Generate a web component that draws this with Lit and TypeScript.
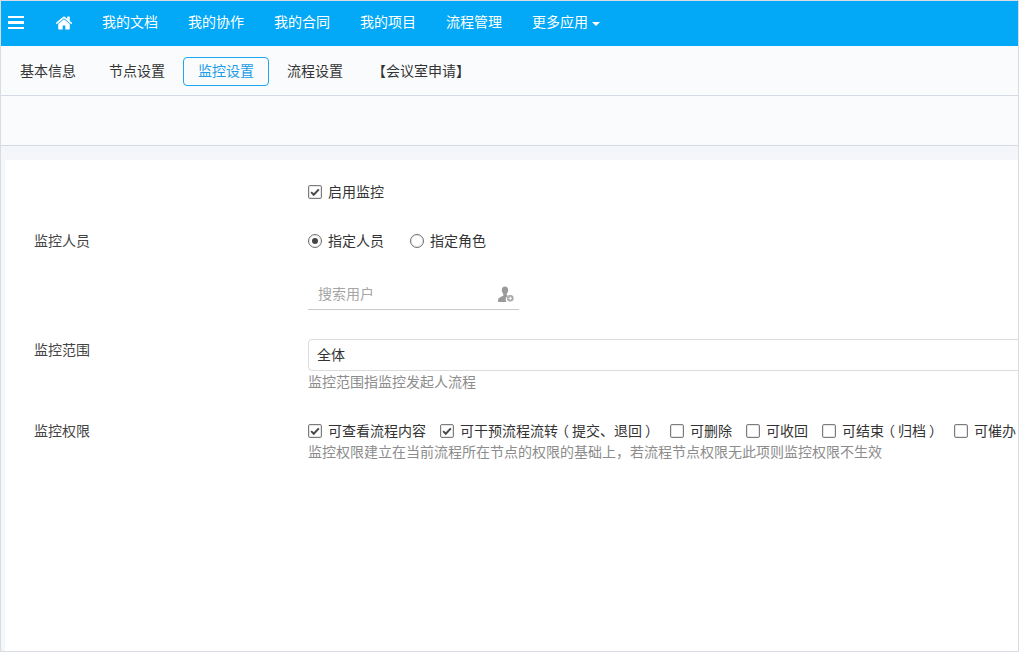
import { LitElement, html, css, svg } from 'lit';
import { customElement } from 'lit/decorators.js';
import { classMap } from 'lit/directives/class-map.js';

const NAV = ['我的文档', '我的协作', '我的合同', '我的项目', '流程管理'];
const TABS = ['基本信息', '节点设置', '监控设置', '流程设置', '【会议室申请】'];
const PERMS = [
  { label: '可查看流程内容', checked: true },
  { label: '可干预流程流转（提交、退回）', checked: true },
  { label: '可删除', checked: false },
  { label: '可收回', checked: false },
  { label: '可结束（归档）', checked: false },
  { label: '可催办', checked: false },
];

const homeIcon = svg`<svg class="home" viewBox="0 0 1792 1792" width="18" height="18"><path fill="#fff" d="M1472 992v480q0 26-19 45t-45 19h-384v-384h-256v384h-384q-26 0-45-19t-19-45v-480q0-1 .5-3t.5-3l575-474 575 474q1 2 1 6zm223-69l-62 74q-8 9-21 11h-3q-13 0-21-7l-692-577-692 577q-12 8-24 7-13-2-21-11l-62-74q-8-10-7-23.500t11-21.500l719-599q32-26 76-26t76 26l244 204v-195q0-14 9-23t23-9h192q14 0 23 9t9 23v408l219 182q10 8 11 21.500t-7 23.500z"/></svg>`;

const userIcon = svg`<svg viewBox="0 0 16 16" width="16" height="16">
  <path fill="#9a9a9a" d="M7 0.500c2 0 3.200 1.500 3.200 3.600 0 1.500-.6 2.900-1.500 3.600v1.300c.6.300 1 .5 1.300.7a4.300 4.300 0 0 0-1.500 6.300H1c-.8 0-1-.5-1-1.100 0-.9.300-2.200 1-2.900.9-.9 2.700-1.500 4.300-2.300V7.700C4.400 7 3.800 5.600 3.800 4.100 3.800 2 5 .5 7 .5z"/>
  <circle cx="12.300" cy="12.300" r="3.300" fill="#a8a8a8"/>
  <path stroke="#fff" stroke-width="1" d="M10.600 12.300h3.400M12.300 10.600v3.400"/>
</svg>`;

const checkMark = svg`<svg viewBox="0 0 14 14" width="12" height="12"><path fill="none" stroke="#4a4a4a" stroke-width="2.300" d="M2.500 7.200l3 3 6-6.200"/></svg>`;

@customElement('app-root')
export class AppRoot extends LitElement {
  static styles = css`
    :host {
      display: block;
      width: 1019px;
      height: 652px;
      box-sizing: border-box;
      border: 1px solid #d9dce3;
      overflow: hidden;
      background: #f4f6fa;
      font-family: "Noto Sans CJK SC", "Liberation Sans", sans-serif;
      font-size: 14px;
      color: #333;
    }
    .nav {
      display: flex;
      align-items: center;
      box-sizing: border-box;
      height: 45px;
      padding-bottom: 2px;
      background: #03a9f7;
      color: #fff;
    }
    .burger {
      display: flex;
      flex-direction: column;
      gap: 3px;
      width: 16px;
      margin-left: 7px;
    }
    .burger i {
      display: block;
      height: 2.500px;
      background: #fff;
    }
    .home {
      display: block;
      margin-left: 31px;
      margin-right: 29px;
    }
    .nav-item {
      display: flex;
      align-items: center;
      margin-right: 30px;
      margin-bottom: 4px;
      line-height: 20px;
    }
    .caret {
      width: 0;
      height: 0;
      margin-left: 4px;
      margin-top: 7px;
      border-left: 4px solid transparent;
      border-right: 4px solid transparent;
      border-top: 4px solid #fff;
    }
    .tabs {
      display: flex;
      align-items: center;
      gap: 3px;
      box-sizing: border-box;
      height: 50px;
      padding: 0 4px;
      background: #fafbfd;
      border-bottom: 1px solid #d3dae3;
    }
    .tab {
      box-sizing: border-box;
      height: 29px;
      margin-top: 2px;
      padding: 0 14px;
      border: 1px solid transparent;
      border-radius: 4px;
      line-height: 25px;
      white-space: nowrap;
    }
    .tab:last-child {
      margin-left: -4px;
    }
    .tab.active {
      border-color: #1da7ee;
      color: #1a9de6;
    }
    .toolbar {
      box-sizing: border-box;
      height: 50px;
      background: #fafbfd;
      border-bottom: 1px solid #d3dae3;
    }
    .body {
      height: 505px;
      padding: 14px 0 0 4px;
      box-sizing: border-box;
    }
    .panel {
      height: 100%;
      box-sizing: border-box;
      padding: 22px 0 0 29px;
      background: #fff;
      overflow: hidden;
    }
    .row {
      display: grid;
      grid-template-columns: 274px 1fr;
      line-height: 18px;
      margin-bottom: 31px;
    }
    .row.search-row {
      margin-top: -2px;
      margin-bottom: 29px;
    }
    .label {
      color: #444;
    }
    .field {
      min-width: 0;
    }
    .opts {
      display: flex;
      white-space: nowrap;
    }
    .opts.radios {
      gap: 26px;
    }
    .opts.checks {
      gap: 14px;
    }
    .opt {
      display: flex;
      align-items: center;
      gap: 6px;
      flex: none;
    }
    .box {
      display: flex;
      align-items: center;
      justify-content: center;
      box-sizing: border-box;
      width: 14px;
      height: 14px;
      margin-top: 2px;
      border: 1px solid #7c7c7c;
      border-radius: 2px;
      background: #fff;
      box-shadow: inset 0 0 0 1px rgba(0, 0, 0, 0.1);
    }
    .radio {
      box-sizing: border-box;
      display: flex;
      align-items: center;
      justify-content: center;
      width: 14px;
      height: 14px;
      margin-top: 2px;
      border: 1px solid #6f6f6f;
      border-radius: 50%;
      box-shadow: inset 0 0 0 1px rgba(0, 0, 0, 0.08);
    }
    .radio.on::after {
      content: "";
      width: 6px;
      height: 6px;
      border-radius: 50%;
      background: #444;
    }
    .paren {
      display: inline-block;
      width: 14px;
      text-align: center;
      font-feature-settings: "palt";
    }
    .search {
      display: flex;
      align-items: center;
      justify-content: space-between;
      box-sizing: border-box;
      width: 211px;
      height: 32px;
      padding: 0 5px 0 10px;
      border-bottom: 1px solid #c9c9c9;
      color: #a5a5a5;
    }
    .search span {
      margin-bottom: 2px;
    }
    .search svg {
      display: block;
    }
    .select {
      box-sizing: border-box;
      width: 760px;
      height: 32px;
      padding-left: 8px;
      border: 1px solid #dcdcdc;
      border-radius: 4px;
      line-height: 28px;
    }
    .hint {
      color: #8c8c8c;
      line-height: 18px;
      margin-top: 1px;
      white-space: nowrap;
    }
    .row.scope .label {
      padding-top: 1px;
    }
    .row.perm .hint {
      margin-top: 3px;
    }
  `;

  // yahei centres full-width parens in their cell, so center the glyph by hand
  private punct(label: string) {
    return label.split(/([（）])/).map((part) =>
      part === '（' || part === '）' ? html`<span class="paren">${part}</span>` : part
    );
  }

  private checkbox(label: string, checked: boolean) {
    return html`<label class="opt"><span class="box">${checked ? checkMark : ''}</span><span>${this.punct(label)}</span></label>`;
  }

  private radio(label: string, on: boolean) {
    return html`<label class="opt"><span class=${classMap({ radio: true, on })}></span><span>${label}</span></label>`;
  }

  render() {
    return html`
      <div class="nav">
        <div class="burger"><i></i><i></i><i></i></div>
        ${homeIcon}
        ${NAV.map((item) => html`<div class="nav-item">${item}</div>`)}
        <div class="nav-item">更多应用<span class="caret"></span></div>
      </div>
      <div class="tabs">
        ${TABS.map((t, i) => html`<div class=${classMap({ tab: true, active: i === 2 })}>${t}</div>`)}
      </div>
      <div class="toolbar"></div>
      <div class="body">
        <div class="panel">
          <div class="row">
            <div></div>
            <div class="field opts">${this.checkbox('启用监控', true)}</div>
          </div>
          <div class="row">
            <div class="label">监控人员</div>
            <div class="field opts radios">
              ${this.radio('指定人员', true)}
              ${this.radio('指定角色', false)}
            </div>
          </div>
          <div class="row search-row">
            <div></div>
            <div class="field">
              <div class="search"><span>搜索用户</span>${userIcon}</div>
            </div>
          </div>
          <div class="row scope">
            <div class="label">监控范围</div>
            <div class="field">
              <div class="select">全体</div>
              <div class="hint">监控范围指监控发起人流程</div>
            </div>
          </div>
          <div class="row perm">
            <div class="label">监控权限</div>
            <div class="field">
              <div class="opts checks">${PERMS.map((p) => this.checkbox(p.label, p.checked))}</div>
              <div class="hint">监控权限建立在当前流程所在节点的权限的基础上，若流程节点权限无此项则监控权限不生效</div>
            </div>
          </div>
        </div>
      </div>
    `;
  }
}
